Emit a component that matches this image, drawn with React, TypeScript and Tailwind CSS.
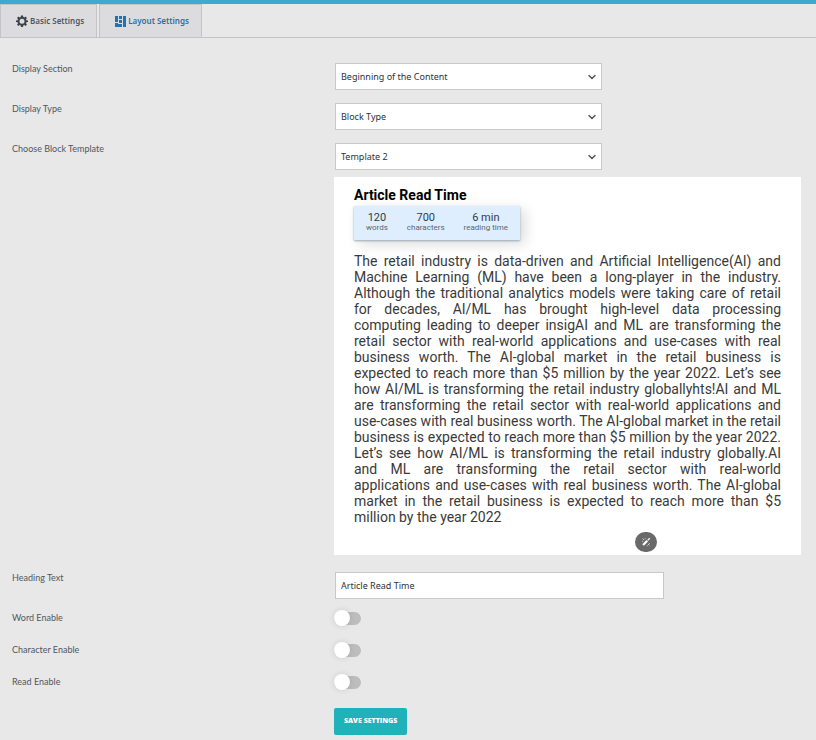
import { useState } from "react";
import type { ReactNode } from "react";
import { ChevronDown } from "lucide-react";

const previewLines = [
  "The retail industry is data-driven and Artificial Intelligence(AI) and",
  "Machine Learning (ML) have been a long-player in the industry.",
  "Although the traditional analytics models were taking care of retail",
  "for decades, AI/ML has brought high-level data processing",
  "computing leading to deeper insigAI and ML are transforming the",
  "retail sector with real-world applications and use-cases with real",
  "business worth. The AI-global market in the retail business is",
  "expected to reach more than $5 million by the year 2022. Let’s see",
  "how AI/ML is transforming the retail industry globallyhts!AI and ML",
  "are transforming the retail sector with real-world applications and",
  "use-cases with real business worth. The AI-global market in the retail",
  "business is expected to reach more than $5 million by the year 2022.",
  "Let’s see how AI/ML is transforming the retail industry globally.AI",
  "and ML are transforming the retail sector with real-world",
  "applications and use-cases with real business worth. The AI-global",
  "market in the retail business is expected to reach more than $5",
  "million by the year 2022",
];

const stats = [
  { value: "120", label: "words" },
  { value: "700", label: "characters" },
  { value: "6 min", label: "reading time" },
];

export default function App() {
  const [heading, setHeading] = useState("Article Read Time");

  return (
    <div className="min-h-screen bg-[#e8e8e8] font-['Noto_Sans',sans-serif] text-[9px] text-[#50575e]">
      <header className="border-t-4 border-[#41a8cf]">
        <nav className="flex gap-0.5 border-b border-[#c3c4c7]">
          <Tab label="Basic Settings" icon={<GearIcon />} />
          <Tab label="Layout Settings" icon={<LayoutIcon />} active />
        </nav>
      </header>

      <form
        className="flex flex-col pt-[25px] pr-[15px] pl-3"
        onSubmit={(event) => event.preventDefault()}
      >
        <Row id="display-section" label="Display Section" className="h-10">
          <Select
            id="display-section"
            options={["Beginning of the Content", "End of the Content"]}
          />
        </Row>
        <Row id="display-type" label="Display Type" className="h-10">
          <Select id="display-type" options={["Block Type", "Inline Type"]} />
        </Row>
        <Row id="block-template" label="Choose Block Template">
          <Select id="block-template" options={["Template 2", "Template 1"]} />
          <Preview />
        </Row>
        <Row id="heading-text" label="Heading Text" className="mt-[17px] h-10">
          <input
            id="heading-text"
            type="text"
            value={heading}
            onChange={(event) => setHeading(event.target.value)}
            className="ml-px block h-[27px] w-full max-w-[329px] border border-[#c6c8ca] bg-white px-[5px] text-[#2c3338] outline-none"
          />
        </Row>
        <Row id="word-enable" label="Word Enable" className="h-8">
          <Toggle id="word-enable" />
        </Row>
        <Row id="character-enable" label="Character Enable" className="h-8">
          <Toggle id="character-enable" />
        </Row>
        <Row id="read-enable" label="Read Enable" className="h-8">
          <Toggle id="read-enable" />
        </Row>
        <div className="flex">
          <div className="w-[322px] shrink-0" />
          <button
            type="submit"
            className="h-[27px] rounded-xs bg-[#20b2b8] px-2.5 font-['Open_Sans',sans-serif] text-[7px] font-extrabold text-white"
          >
            SAVE SETTINGS
          </button>
        </div>
      </form>
    </div>
  );
}

function Tab({ label, icon, active }: { label: string; icon: ReactNode; active?: boolean }) {
  return (
    <a
      href="#"
      className={`flex h-[33px] items-center gap-0.5 border-x border-t border-[#c3c4c7] bg-[#dcdcde] pr-3 pl-[15px] text-[8px] font-semibold ${
        active ? "text-[#2271b1]" : "text-[#50575e]"
      }`}
    >
      {icon}
      {label}
    </a>
  );
}

function Row({
  id,
  label,
  className = "",
  children,
}: {
  id: string;
  label: string;
  className?: string;
  children: ReactNode;
}) {
  return (
    <div className={`flex items-start ${className}`}>
      <label
        htmlFor={id}
        className="w-[322px] shrink-0 font-[Lato,sans-serif] leading-3"
      >
        {label}
      </label>
      <div className="min-w-0 flex-1">{children}</div>
    </div>
  );
}

function Select({ id, options }: { id: string; options: string[] }) {
  return (
    <div className="relative ml-px max-w-[267px]">
      <select
        id={id}
        className="block h-[27px] w-full appearance-none border border-[#c6c8ca] bg-white px-[5px] text-[#2c3338] outline-none"
      >
        {options.map((option) => (
          <option key={option}>{option}</option>
        ))}
      </select>
      <ChevronDown
        className="pointer-events-none absolute top-2 right-1 size-3 text-[#50575e]"
        strokeWidth={3}
      />
    </div>
  );
}

function Preview() {
  return (
    <section className="mt-[7px] bg-white px-5 pt-2.5 pb-[3px] font-[Roboto,sans-serif]">
      <h2 className="text-[14px] leading-4 font-bold text-black">Article Read Time</h2>
      <div className="mt-[3px] flex w-fit gap-[19px] bg-[#deeeff] px-3 pt-1.5 pb-2 text-center shadow-[0_1px_2px_#9aa7b4,5px_4px_14px_rgba(0,0,0,0.14)]">
        {stats.map((stat) => (
          <div key={stat.label}>
            <div className="text-[11px] leading-3 text-[#333c46]">{stat.value}</div>
            <div className="text-[8px] leading-2 text-[#5c666f]">{stat.label}</div>
          </div>
        ))}
      </div>
      <p className="mt-[13px] text-[14px] leading-4 text-[#3a3a3a]">
        {previewLines.map((line, index) => (
          <span
            key={line}
            className={`block whitespace-nowrap ${
              index < previewLines.length - 1 ? "[text-align-last:justify]" : ""
            }`}
          >
            {line}{" "}
          </span>
        ))}
      </p>
      <div className="flex justify-center pt-[7px] pl-39">
        <button
          type="button"
          aria-label="Edit"
          className="flex h-5 w-[22px] items-center justify-center rounded-full bg-[#696969] text-white"
        >
          <WandIcon />
        </button>
      </div>
    </section>
  );
}

function Toggle({ id }: { id: string }) {
  return (
    <input
      id={id}
      type="checkbox"
      role="switch"
      className="relative block h-[13px] w-[27px] appearance-none rounded-full bg-[#bdbdbd] before:absolute before:-top-0.5 before:left-0 before:size-4 before:rounded-full before:bg-white before:shadow-[0_0_6px_rgba(0,0,0,0.12)] checked:bg-[#20b2b8] checked:before:left-[11px]"
    />
  );
}

function GearIcon() {
  return (
    <svg viewBox="0 0 24 24" className="size-3 fill-[#3c434a]">
      <path
        fillRule="evenodd"
        d="M10 1h4l.6 3.2 2 .8 2.7-1.8 2.6 2.6L20 8.500l.8 2L24 11v3l-3.200.6-.8 2 1.900 2.700-2.600 2.600-2.700-1.900-2 .8L14 24h-4l-.6-3.200-2-.8-2.700 1.900-2.600-2.600L4 16.600l-.8-2L0 14v-3l3.200-.6.8-2-1.900-2.600 2.600-2.600L7.400 5l2-.8zM12 7.500a5 5 0 1 0 0 10 5 5 0 0 0 0-10z"
      />
    </svg>
  );
}

function LayoutIcon() {
  return (
    <svg viewBox="0 0 11 11" className="size-[11px] fill-current">
      <path d="M0 0h3v6H0zM4 0h3v3H4zM4 4h3v3H4zM0 7h3v1h4v3H0zM8 0h3v11H8z" />
    </svg>
  );
}

function WandIcon() {
  return (
    <svg viewBox="0 0 12 12" className="size-2.5" fill="none" stroke="currentColor">
      <path d="M2.500 9.500 7.500 4.500" strokeWidth="2.600" />
      <path d="M8 4 10.500 1.500" strokeWidth="1.500" />
      <path d="M2 2l1.500 1.500M5 1.500v1M1.500 5h1M8.500 8.500 10 10M10 7.500v1M7 10.500h1" strokeWidth="0.900" />
    </svg>
  );
}
